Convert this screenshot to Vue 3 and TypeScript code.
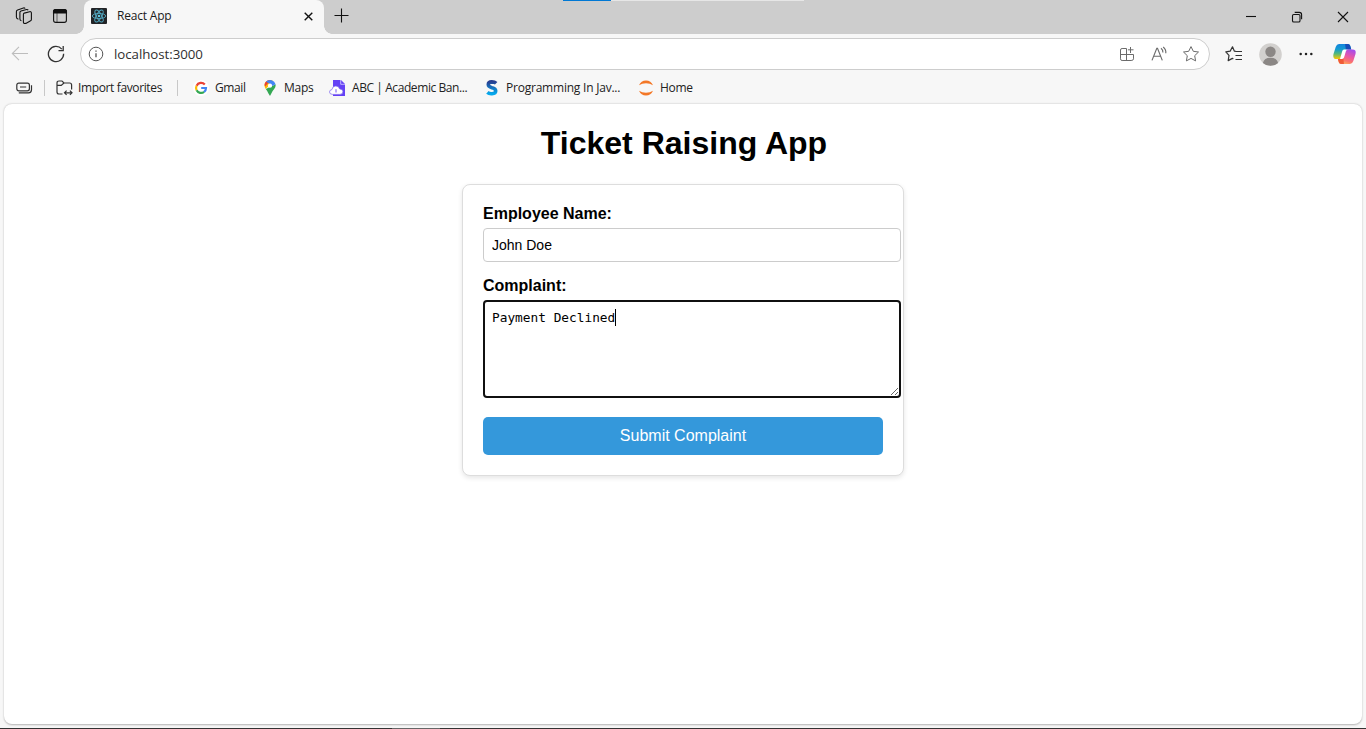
<script setup lang="ts">
import { ref } from 'vue'

interface Bookmark {
  id: string
  label: string
}

const employee = ref('John Doe')
const complaint = ref('Payment Declined')
const bookmarks: Bookmark[] = [
  { id: 'gmail', label: 'Gmail' },
  { id: 'maps', label: 'Maps' },
  { id: 'abc', label: 'ABC | Academic Ban...' },
  { id: 'prog', label: 'Programming In Jav...' },
  { id: 'home', label: 'Home' },
]
</script>

<template>
  <div class="browser">
    <header class="tabs">
      <svg class="workspaces" width="18" height="18" viewBox="0 0 18 18">
        <g stroke-linejoin="round">
          <path d="M9.2 6.1 14.6 4.7q1.8-.3 1.8 1.3v6.6q0 1.1-1.2 1.5l-4.4 2.3q-2.4.6-2.4-1.5V7.5q0-1.1.8-1.4z" />
          <path d="M6.4 13.8q-1.5-.3-1.5-1.8V5.5q0-1.1 1.1-1.5l5.6-1.5q1.1-.2 1.6.6" />
          <path d="M3.4 12.2Q1.4 11.7 1.4 10V4.5q0-1.2 1.2-1.6L8.4 1q1.1-.3 1.8.5" />
        </g>
      </svg>
      <svg class="tab-actions" width="16" height="16" viewBox="0 0 16 16">
        <rect x="1.6" y="1.6" width="12.8" height="12.8" rx="2.2" />
        <path d="M1.5 5V3.5q0-2 2-2h9q2 0 2 2V5z" fill="#111" /><path d="M5 5v9" stroke-width=".6" />
      </svg>
      <div class="tab">
        <svg width="16" height="16" viewBox="0 0 16 16">
          <rect width="16" height="16" rx="1" fill="#222427" />
          <g fill="none" stroke="#52a9c2" stroke-width=".9">
            <ellipse cx="8" cy="8" rx="6.7" ry="2.6" />
            <ellipse cx="8" cy="8" rx="6.7" ry="2.6" transform="rotate(60 8 8)" />
            <ellipse cx="8" cy="8" rx="6.7" ry="2.6" transform="rotate(120 8 8)" />
          </g>
          <circle cx="8" cy="8" r="1.3" fill="#61c6df" />
        </svg>
        <span class="tab-title">React App</span>
        <svg class="close-tab" width="9" height="9" viewBox="0 0 9 9"><path d="m.7.7 7.6 7.6m0-7.6L.7 8.3" /></svg>
      </div>
      <svg class="new-tab" width="15" height="15" viewBox="0 0 15 15"><path d="M7.5.5v14M.5 7.5h14" /></svg>
      <div class="progress"><i></i></div>
      <div class="window-controls">
        <svg width="12" height="12" viewBox="0 0 12 12"><path d="M1 5.5h10" /></svg>
        <svg width="12" height="12" viewBox="0 0 12 12"><rect x="1.5" y="3.5" width="7.5" height="7.5" rx="1.3" /><path d="M3.7 1.4h4.6q2.3 0 2.3 2.3v4.6" /></svg>
        <svg width="12" height="12" viewBox="0 0 12 12"><path d="m1 1 10 10M11 1 1 11" /></svg>
      </div>
    </header>

    <nav class="toolbar">
      <svg class="back" width="18" height="16" viewBox="0 0 18 16"><path d="M17 7.5H1.5M8 .8 1.3 7.5 8 14.2" /></svg>
      <svg class="reload" width="18" height="18" viewBox="0 0 18 18"><path d="M16.6 8.8A7.6 7.6 0 1 1 14.8 4.1M16.2 1v4.7h-4.7" /></svg>
      <div class="address">
        <svg class="line-icon info" width="16" height="16" viewBox="0 0 16 16"><circle cx="8" cy="8" r="6.8" /><path d="M8 7.2v4M8 4.5v1.2" stroke-width="1.3" /></svg>
        <span class="url">localhost:3000</span>
        <svg class="line-icon" width="16" height="16" viewBox="0 0 16 16"><path d="M7.5 2.5H3.1Q1.5 2.5 1.5 4v8.8q0 1.7 1.6 1.7h9q2.4 0 2.4-1.7V8.5h-13M7.5 2.5v12M11.5 1v6M8.9 3.8h5.6" /></svg>
        <svg class="line-icon" width="17" height="16" viewBox="0 0 17 16"><path d="M1 14.4 5.8 2.2h.7l4.8 12.2M2.8 10.2h6.7M10 2.2q2 1.5 1.9 4.3M12.2 1q3 2.4 2.6 6.3" stroke-width="1.15" /></svg>
        <svg class="line-icon" width="18" height="18" viewBox="0 0 18 18"><path d="M9 1.6 11.3 6.3l5.2.7-3.8 3.7.9 5.2L9 13.4l-4.6 2.5.9-5.2L1.5 7l5.2-.7z" stroke-linejoin="round" /></svg>
      </div>
      <svg class="favorites" width="18" height="18" viewBox="0 0 18 18"><path d="m11 6.3-1.6-.1L7.5 1.8 5.2 6.1l-4.4.8 3.2 3.5-.8 5.2 4.2-2.2 1 .3M11 6.5h6M10.5 10.5h6.5M10.5 14.5h6.5" stroke-linejoin="round" /></svg>
      <svg class="profile" width="23" height="23" viewBox="0 0 23 23">
        <circle cx="11.5" cy="11.5" r="11.3" fill="#d2d0ce" />
        <circle cx="11.5" cy="8.7" r="5.2" fill="#8b8785" />
        <path d="M3.9 19.9q1.2-5.2 7.6-5.2t7.6 5.2a11.3 11.3 0 0 1-15.2 0" fill="#8b8785" />
      </svg>
      <svg class="more" width="14" height="4" viewBox="0 0 14 4"><circle cx="1.7" cy="2" r="1.25" /><circle cx="7" cy="2" r="1.25" /><circle cx="12.3" cy="2" r="1.25" /></svg>
      <svg class="copilot" width="23" height="22" viewBox="0 0 23 22">
        <defs>
          <linearGradient id="leftRibbon" x2="0" y2="1"><stop stop-color="#1584dd" /><stop offset=".35" stop-color="#139bd1" /><stop offset=".65" stop-color="#56b879" /><stop offset="1" stop-color="#ffc700" /></linearGradient>
          <linearGradient id="rightRibbon" x1=".7" y1="0" x2=".3" y2="1"><stop stop-color="#a64cec" /><stop offset=".45" stop-color="#e957a5" /><stop offset=".75" stop-color="#fb746c" /><stop offset="1" stop-color="#ffb35c" /></linearGradient>
        </defs>
        <path d="M6 1h9q1.7 0 2.2 1.8l1.1 3.6H15q-1.8 0-2.3 2L11 14q-.5 2-2.4 2H3.2Q-.5 16 .5 11L2.7 4Q3.7 1 6 1" fill="url(#leftRibbon)" />
        <path d="M12.1 1H15q1.7 0 2.2 1.8l1.1 3.6H15q-1.5 0-2 1.2z" fill="#174cb7" />
        <path d="M17 21H8q-1.7 0-2.2-1.8L4.9 16H8q2.1 0 2.7-2l1.7-5.6q.5-2 2.6-2h4.8q3.7 0 2.7 4.6L20.3 18q-1 3-3.3 3" fill="url(#rightRibbon)" />
        <path d="M10.9 21H8q-1.7 0-2.2-1.8L4.9 16H8q1.7 0 2.4-1.2z" fill="#f05a37" />
        <path d="M11 6.4h4.1q-1.8.1-2.3 2L11.2 14q-.5 1.8-2.4 2H7l2.2-7.8q.4-1.5 1.8-1.8" fill="#fff" />
      </svg>
    </nav>

    <nav class="bookmarks">
      <svg class="stack" width="17" height="12" viewBox="0 0 17 12"><rect x=".8" y="1.2" width="12.6" height="7.6" rx="2" /><path d="M4 5h6.2M2.8 10.8h9.7q3 0 3-3V3.2" /></svg>
      <i class="divider"></i>
      <svg class="folder" width="17" height="16" viewBox="0 0 17 16"><path d="M6.5 14H3Q1 14 1 12V3q0-2 2-2h3l2 2h5.6q2 0 2 2v4.5M1 5.4h4.2L8 3M8.5 12.8H16M10.6 10.7l-2.1 2.1 2.1 2.1M13.9 10.7l2.1 2.1-2.1 2.1" /></svg>
      <span class="label import">Import favorites</span>
      <i class="divider second"></i>
      <div v-for="b in bookmarks" :key="b.id" class="bookmark" :class="b.id">
        <svg v-if="b.id === 'gmail'" width="16" height="16" viewBox="0 0 16 16">
          <circle cx="8" cy="8" r="8" fill="#fff" />
          <g fill="none" stroke-width="2.2">
            <path d="M11.8 4.5A5 5 0 0 0 3.6 5.7" stroke="#ea4335" /><path d="M3.6 5.7a5 5 0 0 0 0 4.6" stroke="#fbbc04" />
            <path d="M3.6 10.3a5 5 0 0 0 7.5 1.6" stroke="#34a853" /><path d="M11.1 11.9A5 5 0 0 0 13 8H8.2" stroke="#4285f4" />
          </g>
        </svg>
        <svg v-else-if="b.id === 'maps'" width="12" height="16" viewBox="0 0 12 16">
          <path d="M1.8 9Q3.4 11 4.3 13.2L6 16l1.6-3Q8.4 11 10.2 9q1.9-2.2 1.3-4.8L9.2 5.5z" fill="#34a853" />
          <path d="M1.7 9 9.5 1.3Q7.3-.4 4.5.2L1.6 2Q-.8 5.2 1.7 9" fill="#fbbc04" />
          <path d="M1.6 2q2-2.3 5.2-1.9L1.2 6.5Q0 4 1.6 2" fill="#ea4335" />
          <path d="M2 1.6Q4.3-.5 7.7.2q3 .8 3.9 4L8.5 6z" fill="#4285f4" />
          <circle cx="6" cy="5.7" r="2.1" fill="#fff" />
        </svg>
        <svg v-else-if="b.id === 'abc'" width="17" height="16" viewBox="0 0 17 16">
          <path d="M4 0h8l4 4v12H4z" fill="#6441f5" /><path d="M11.7 0v4.3H16" fill="none" stroke="#d8d0ff" stroke-width=".8" />
          <path d="M3.4 14.4Q.5 14.2.5 12q0-2.1 2.4-2.4Q3.4 6 6.8 6q3 0 3.9 3 3.2-.1 3.2 2.7 0 2.7-3 2.7z" fill="#fff" stroke="#7a62ee" stroke-width=".7" />
          <path d="M7 12.5V9.2" fill="none" stroke="#6441f5" stroke-width=".9" />
        </svg>
        <svg v-else-if="b.id === 'prog'" width="12" height="16" viewBox="0 0 12 16">
          <defs><linearGradient id="letterFill" x2="0" y2="1"><stop stop-color="#273f91" /><stop offset="1" stop-color="#05a9ed" /></linearGradient></defs>
          <path d="M10.2 3.3Q8.7 1.9 5.8 1.9 2.3 2 2.3 4.6q0 2.2 3.6 3.1 3.8.8 3.8 3.2t-3.8 2.8Q3 13.9 1.4 12.4" fill="none" stroke="url(#letterFill)" stroke-width="3.6" />
        </svg>
        <svg v-else width="16" height="16" viewBox="0 0 16 16"><path d="M1 5.3Q3 .6 8 .6t7 4.7Q12 3.2 8 3.2T1 5.3M1 10.7q2 4.7 7 4.7t7-4.7q-3 2.1-7 2.1t-7-2.1" fill="#f37726" /></svg>
        <span class="label">{{ b.label }}</span>
      </div>
    </nav>

    <main class="page">
      <h1>Ticket Raising App</h1>
      <form class="card" @submit.prevent>
        <label for="employee">Employee Name:</label>
        <input id="employee" v-model="employee" type="text" />
        <label for="complaint">Complaint:</label>
        <div class="complaint-field">
          <textarea id="complaint" v-model="complaint" spellcheck="false"></textarea>
          <i class="caret"></i>
        </div>
        <button type="submit">Submit Complaint</button>
      </form>
    </main>
    <div class="taskbar-edge"><i></i></div>
  </div>
</template>

<style>
html, body { margin: 0; overflow: hidden; }
</style>

<style scoped>
* { box-sizing: border-box; }
svg { display: block; flex: none; fill: none; stroke-width: 1.1; }
.browser { width: 1366px; height: 729px; display: flex; flex-direction: column; background: #f7f7f7; color: #1b1b1b; font-family: "Open Sans", "Noto Sans", sans-serif; position: relative; }
.tabs { height: 34px; flex: none; display: flex; align-items: center; background: #cdcdcd; padding-left: 15px; }
.tabs > svg, .close-tab, .window-controls svg { stroke: #111; }
.workspaces { margin-top: -2px; }
.tab-actions { margin: -2px 0 0 19px; }
.tab { position: relative; width: 240px; height: 34px; margin-left: 16px; padding: 0 11px 2px 7px; display: flex; align-items: center; background: #f7f7f7; border-radius: 8px 8px 0 0; }
.tab::before, .tab::after { content: ""; position: absolute; bottom: 0; width: 8px; height: 8px; }
.tab::before { left: -8px; background: radial-gradient(circle at 0 0, #cdcdcd 7.5px, #f7f7f7 8px); }
.tab::after { right: -8px; background: radial-gradient(circle at 100% 0, #cdcdcd 7.5px, #f7f7f7 8px); }
.tab-title { font-size: 12px; letter-spacing: -.2px; margin-left: 10px; line-height: 16px; }
.close-tab { margin-left: auto; stroke-width: 1.4; }
.new-tab { margin: -3px 0 0 10px; }
.progress { position: absolute; top: 0; left: 563px; width: 241px; height: 1px; background: #e6e6e6; }
.progress i { display: block; width: 48px; height: 1px; background: #0078d4; }
.window-controls { margin-left: auto; padding-right: 17px; display: flex; gap: 34px; }
.toolbar { height: 40px; flex: none; display: flex; align-items: center; padding: 0 10px 0 11px; stroke: #333; }
.back { stroke: #bdbdbd; }
.reload { margin-left: 18px; stroke-width: 1.3; }
.address { width: 1130px; height: 32px; margin-left: 15px; padding: 0 9px 0 7px; display: flex; align-items: center; gap: 16px; border: 1px solid #cdcdcd; border-radius: 16px; background: #fff; }
.address .info { margin-right: -6px; stroke: #555; }
.line-icon { stroke: #6b6b6b; stroke-width: 1; }
.address .line-icon:last-child { margin-left: -2px; }
.url { flex: 1; font-size: 13.3px; letter-spacing: -.05px; color: #303030; }
.favorites { margin-left: 15px; stroke-width: 1.2; }
.profile { margin-left: 15.5px; stroke: none; }
.more { margin-left: 17.5px; fill: #222; stroke: none; }
.copilot { margin-left: 19.6px; stroke: none; }
.bookmarks { height: 30px; flex: none; display: flex; align-items: center; padding: 0 0 2px 16px; }
.stack, .folder { stroke: #333; stroke-width: 1.2; }
.divider { width: 1px; height: 16px; margin-left: 11px; background: #c8c8c8; }
.folder { margin: 0 .5px 0 10.5px; }
.import { margin-left: 5px; width: 99px; }
.divider.second { margin: 0 15px 0 0; }
.label { font-size: 12px; letter-spacing: -.28px; line-height: 16px; white-space: nowrap; color: #222; }
.label.import { letter-spacing: -.37px; }
.bookmark { display: flex; align-items: center; flex: none; }
.gmail { width: 71px; }
.maps { width: 66px; }
.abc { width: 156px; }
.prog { width: 152px; }
.gmail .label { margin-left: 6px; letter-spacing: -.4px; }
.maps .label { margin-left: 8px; }
.abc svg { margin: 0 1px 0 -1px; }
.abc .label { margin-left: 5px; letter-spacing: -.42px; }
.prog .label { margin-left: 8px; letter-spacing: -.22px; }
.home .label { margin-left: 6px; }
.page { width: 1358px; height: 620px; margin-left: 4px; display: flex; flex-direction: column; align-items: center; background: #fff; border-radius: 8px; box-shadow: 0 .5px 2px rgba(0,0,0,.28); font-family: "Liberation Sans", Arial, sans-serif; color: #000; }
h1 { margin: 20px 0 21px; padding-left: 2px; font-size: 32px; line-height: 39px; font-weight: 700; white-space: nowrap; }
.card { width: 442px; height: 292px; padding: 20px; border: 1px solid #ddd; border-radius: 8px; box-shadow: 0 2px 5px rgba(0,0,0,.1); background: #fff; }
label { display: block; font-size: 16px; line-height: 18px; font-weight: 700; margin-bottom: 5px; }
input, textarea { display: block; width: 418px; margin: 0; padding: 8px; border: 1px solid #ccc; border-radius: 4px; outline: none; background: #fff; color: #000; }
input { height: 34px; margin-bottom: 15px; font: 14px "Liberation Sans", Arial, sans-serif; }
.complaint-field { position: relative; width: 418px; height: 98px; margin-bottom: 19px; }
textarea { height: 98px; padding: 7px; border: 2px solid #101010; font: 12.8px/17px "DejaVu Sans Mono", monospace; resize: vertical; }
.caret { position: absolute; left: 132px; top: 9px; width: 1px; height: 17px; background: #000; }
button { display: block; width: 400px; height: 38px; padding: 0; border: 0; border-radius: 5px; background: #3498db; color: #fff; font: 16px "Liberation Sans", Arial, sans-serif; }
.taskbar-edge { height: 1px; margin-top: auto; background: #333; }
.taskbar-edge i { display: block; width: 48px; height: 1px; margin-left: 392px; background: #666; }
</style>
